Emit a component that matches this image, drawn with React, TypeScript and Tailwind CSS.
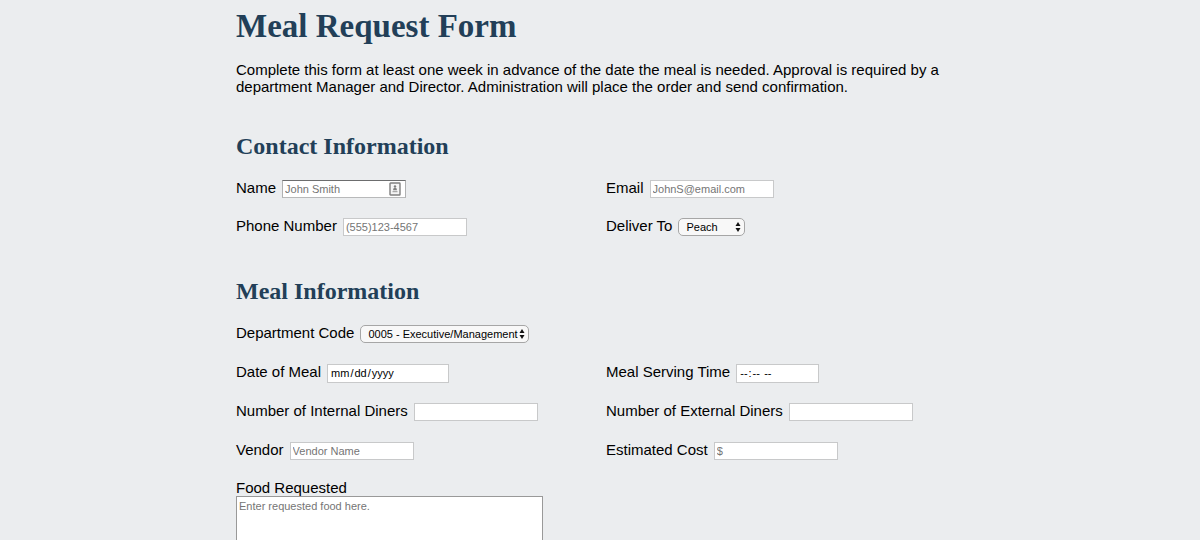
import type { InputHTMLAttributes, ReactNode } from 'react';

const field =
  'h-[18px] w-[124px] rounded-none border border-[#c8c9ca] bg-white px-[2px] text-[11px] leading-[14px] text-black outline-none placeholder:text-[#757575]';

const picker =
  'h-[19px] rounded-none border border-[#c8c9ca] bg-white px-[2px] text-[11px] leading-[14px] text-black outline-none [&::-webkit-calendar-picker-indicator]:hidden [&::-webkit-datetime-edit]:p-0 [&::-webkit-datetime-edit-fields-wrapper]:p-0';

function Row({ id, label, children }: { id: string; label: string; children: ReactNode }) {
  return (
    <div className="flex h-[18px] items-baseline gap-[6px]">
      <label htmlFor={id} className="whitespace-nowrap">
        {label}
      </label>
      {children}
    </div>
  );
}

function TextField({ id, label, ...rest }: { id: string; label: string } & InputHTMLAttributes<HTMLInputElement>) {
  return (
    <Row id={id} label={label}>
      <input id={id} className={field} {...rest} />
    </Row>
  );
}

function SelectField({ id, label, options, width }: { id: string; label: string; options: string[]; width: string }) {
  return (
    <Row id={id} label={label}>
      <span className="relative inline-flex items-baseline">
        <select
          id={id}
          className={`${width} h-[18px] appearance-none rounded-[5px] border border-[#a6a6a6] bg-[#f8f8f8] pr-[10px] pl-[7px] text-[11px] leading-[14px] text-black outline-none`}
        >
          {options.map((o) => (
            <option key={o}>{o}</option>
          ))}
        </select>
        <svg viewBox="0 0 6 10" className="pointer-events-none absolute top-1 right-1 h-[10px] w-[6px]" aria-hidden="true">
          <path d="M3 0L5.5 4H.5zM3 10L.5 6h5z" fill="#111" />
        </svg>
      </span>
    </Row>
  );
}

function Heading({ children }: { children: ReactNode }) {
  return <h2 className="font-['Liberation_Serif',serif] text-[24px] leading-[30px] font-bold text-[#223f58]">{children}</h2>;
}

export default function App() {
  return (
    <div className="h-screen overflow-hidden bg-[#ebedef] font-['Liberation_Sans',sans-serif] text-[15px] leading-[17px] text-black">
      <main className="mx-auto max-w-[728px] pt-[6px]">
        <h1 className="font-['Liberation_Serif',serif] text-[33px] leading-[40px] font-bold text-[#223f58]">
          Meal Request Form
        </h1>
        <p className="mt-[15px]">
          Complete this form at least one week in advance of the date the meal is needed. Approval is required by a
          department Manager and Director. Administration will place the order and send confirmation.
        </p>
        <form>
          <section className="mt-9">
            <Heading>Contact Information</Heading>
            <div className="mt-[18px] grid grid-cols-2 gap-x-3 gap-y-5">
              <Row id="name" label="Name">
                <span className="relative inline-flex items-baseline">
                  <input
                    id="name"
                    placeholder="John Smith"
                    className="h-[18px] w-[124px] rounded-none border border-t-[#6c6d6e] border-r-[#b0b1b2] border-b-[#b8b9ba] border-l-[#b0b1b2] bg-white pr-5 pl-[2px] text-[11px] leading-[14px] text-black outline-none placeholder:text-[#757575]"
                  />
                  <svg viewBox="0 0 12 14" className="pointer-events-none absolute top-[2px] right-[5px] h-[14px] w-3" aria-hidden="true">
                    <rect x="1" y="1" width="10" height="12" rx="0.5" fill="#f5f5f5" stroke="#808080" strokeWidth="1.4" />
                    <circle cx="6" cy="4.5" r="1.2" fill="#808080" />
                    <path d="M4 8.2Q4 5.8 6 5.8T8 8.2z" fill="#808080" />
                    <path d="M3.5 9.7h5" stroke="#999" />
                  </svg>
                </span>
              </Row>
              <TextField id="email" label="Email" type="email" placeholder="JohnS@email.com" />
              <TextField id="phone" label="Phone Number" type="tel" placeholder="(555)123-4567" />
              <SelectField id="deliver" label="Deliver To" options={['Peach']} width="w-[67px]" />
            </div>
          </section>
          <section className="mt-[41px]">
            <Heading>Meal Information</Heading>
            <div className="mt-[18px] grid grid-cols-2 gap-x-3 gap-y-[21px]">
              <div className="col-span-2">
                <SelectField id="dept" label="Department Code" options={['0005 - Executive/Management']} width="w-[169px]" />
              </div>
              <Row id="date" label="Date of Meal">
                <input id="date" type="date" className={`${picker} w-[122px]`} />
              </Row>
              <Row id="time" label="Meal Serving Time">
                <input id="time" type="time" className={`${picker} w-[83px]`} />
              </Row>
              <TextField id="internal" label="Number of Internal Diners" />
              <TextField id="external" label="Number of External Diners" />
              <TextField id="vendor" label="Vendor" placeholder="Vendor Name" />
              <TextField id="cost" label="Estimated Cost" placeholder="$" />
            </div>
            <div className="mt-5 flex flex-col items-start">
              <label htmlFor="food">Food Requested</label>
              <textarea
                id="food"
                placeholder="Enter requested food here."
                className="h-[90px] w-[307px] resize-none rounded-none border border-[#999] bg-white px-[2px] py-[2px] text-[11px] leading-[14px] text-black outline-none placeholder:text-[#757575]"
              />
            </div>
          </section>
        </form>
      </main>
    </div>
  );
}
